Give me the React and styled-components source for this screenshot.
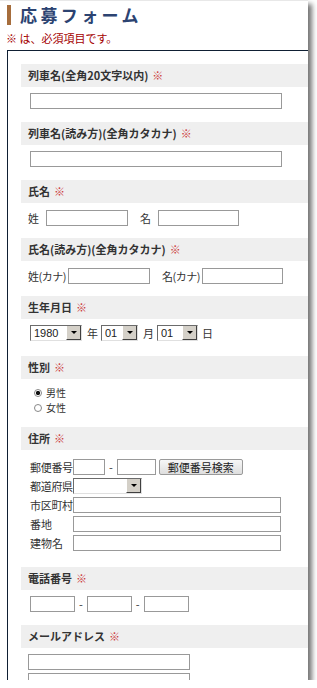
import React from 'react'
import styled, { createGlobalStyle } from 'styled-components'

const GlobalStyle = createGlobalStyle`
  body {
    margin: 0;
    background: #fff;
    font-family: "Noto Sans CJK JP", "Liberation Sans", sans-serif;
    color: #333;
  }
`;

const Page = styled.div`
  width: 308px;
  height: 680px;
  background: #fff;
  border-top: 1px solid #e8e8e8;
  box-sizing: border-box;
  box-shadow: 4px 4px 5px rgba(0, 0, 0, 0.55);
  overflow: hidden;
`;

const Title = styled.h1`
  margin: 4px 0 0 7px;
  height: 20px;
  border-left: 4px solid #a66d3c;
  padding-left: 9px;
  font-size: 17px;
  line-height: 20px;
  font-weight: bold;
  letter-spacing: 3.4px;
  color: #2c4371;
  font-family: "Noto Sans CJK JP", sans-serif;
`;

const Note = styled.p`
  margin: 6px 0 0 6px;
  font-size: 11px;
  line-height: 14px;
  color: #a40000;
`;

const FormBox = styled.div`
  margin: 5px 0 0 7px;
  border-top: 1px solid #0f1f33;
  border-left: 1px solid #0f1f33;
  padding: 13px 0 0 13px;
`;

const Section = styled.section``;

const Head = styled.div`
  height: 23px;
  line-height: 23px;
  background: #efefef;
  padding-left: 7px;
  font-size: 11px;
  font-weight: bold;
  color: #333;
`;

const Req = styled.span`
  color: #cc3a3a;
  font-weight: normal;
  margin-left: 4px;
`;

const Body = styled.div`
  display: flex;
  flex-direction: column;
  gap: ${p => p.$gap ?? 3}px;
  padding: ${p => p.$top ?? 6}px 0 ${p => p.$bottom ?? 13}px ${p => p.$left ?? 9}px;
  font-size: 11px;
`;

const Row = styled.div`
  display: flex;
  align-items: center;
  height: ${p => p.$h || 16}px;
`;

const TextInput = styled.input`
  box-sizing: border-box;
  width: ${p => p.$w}px;
  height: 16px;
  border: 1px solid #999;
  padding: 0 2px;
  margin: 0;
  font-size: 11px;
  background: #fff;
  flex-shrink: 0;
`;

const Label = styled.span`
  display: inline-block;
  flex-shrink: 0;
  width: ${p => (p.$w ? p.$w + 'px' : 'auto')};
  margin: 0 ${p => p.$mr || 0}px 0 ${p => p.$ml || 0}px;
  font-size: ${p => p.$fs || 11}px;
  line-height: 12px;
  color: #333;
  white-space: nowrap;
  letter-spacing: ${p => p.$ls || 0}px;
`;

const Dash = styled.span`
  margin: 0 4px;
  font-size: 11px;
  line-height: 12px;
`;

const SelectBox = styled.div`
  display: flex;
  flex-shrink: 0;
  box-sizing: border-box;
  width: ${p => p.$w}px;
  height: 16px;
  border-top: 1px solid #6b6b6b;
  border-left: 1px solid #6b6b6b;
  border-right: 1px solid #e0e0e0;
  border-bottom: 1px solid #e0e0e0;
  background: #fff;
`;

const Select = styled.select`
  appearance: none;
  flex: 1;
  min-width: 0;
  border: none;
  outline: none;
  background: transparent;
  padding: 0 3px;
  font-size: 11px;
  font-family: "Liberation Sans", sans-serif;
  color: #222;
`;

const DropButton = styled.span`
  width: 15px;
  background: #d4d0c8;
  border-left: 1px solid #fff;
  border-right: 1px solid #404040;
  border-bottom: 1px solid #404040;
  display: flex;
  align-items: center;
  justify-content: center;
  box-sizing: border-box;
  &::after {
    content: '';
    border-left: 3px solid transparent;
    border-right: 3px solid transparent;
    border-top: 3px solid #000;
  }
`;

const Button = styled.button`
  height: 16px;
  padding: 0 8px;
  margin-left: 3px;
  border: 1px solid #9a9a9a;
  border-radius: 2px;
  background: linear-gradient(#f7f7f7, #dedede);
  font-size: 11px;
  line-height: 14px;
  font-family: "Noto Sans CJK JP", sans-serif;
  color: #222;
`;

const Radio = styled.input`
  appearance: none;
  width: 8px;
  height: 8px;
  margin: 0 4px 0 0;
  border-radius: 50%;
  border: 1px solid #888;
  background: ${p => (p.checked ? 'radial-gradient(circle, #111 45%, #fff 55%)' : '#fff')};
`;

const DropDown = ({ w, value }) => (
  <SelectBox $w={w}>
    <Select defaultValue={value}>
      <option>{value}</option>
    </Select>
    <DropButton />
  </SelectBox>
);

const Field = ({ title, children }) => (
  <Section>
    <Head>
      {title}
      <Req>※</Req>
    </Head>
    {children}
  </Section>
);

const App = () => (
  <Page>
    <GlobalStyle />
    <Title>応募フォーム</Title>
    <Note>※ は、必須項目です。</Note>
    <FormBox>
      <Field title="列車名(全角20文字以内)">
        <Body>
          <Row><TextInput $w={252} /></Row>
        </Body>
      </Field>
      <Field title="列車名(読み方)(全角カタカナ)">
        <Body>
          <Row><TextInput $w={252} /></Row>
        </Body>
      </Field>
      <Field title="氏名">
        <Body $top={7} $bottom={12} $left={7}>
          <Row>
            <Label $mr={7}>姓</Label>
            <TextInput $w={82} />
            <Label $ml={12} $mr={7}>名</Label>
            <TextInput $w={81} />
          </Row>
        </Body>
      </Field>
      <Field title="氏名(読み方)(全角カタカナ)">
        <Body $top={7} $bottom={12} $left={7}>
          <Row>
            <Label $mr={2} $ls={-0.5}>姓(カナ)</Label>
            <TextInput $w={82} />
            <Label $ml={12} $mr={2} $ls={-0.5}>名(カナ)</Label>
            <TextInput $w={81} />
          </Row>
        </Body>
      </Field>
      <Field title="生年月日">
        <Body $top={6} $bottom={15} $left={9}>
          <Row>
            <DropDown w={52} value="1980" />
            <Label $ml={5} $mr={3}>年</Label>
            <DropDown w={37} value="01" />
            <Label $ml={5} $mr={3}>月</Label>
            <DropDown w={41} value="01" />
            <Label $ml={4}>日</Label>
          </Row>
        </Body>
      </Field>
      <Field title="性別">
        <Body $top={6} $bottom={12} $left={13} $gap={0}>
          <Row $h={15}>
            <Radio type="radio" name="sex" checked readOnly />
            <Label $fs={10}>男性</Label>
          </Row>
          <Row $h={15}>
            <Radio type="radio" name="sex" checked={false} readOnly />
            <Label $fs={10}>女性</Label>
          </Row>
        </Body>
      </Field>
      <Field title="住所">
        <Body $top={9} $bottom={16} $left={9}>
          <Row>
            <Label $w={43} $ls={-0.3}>郵便番号</Label>
            <TextInput $w={32} />
            <Dash>-</Dash>
            <TextInput $w={39} />
            <Button>郵便番号検索</Button>
          </Row>
          <Row>
            <Label $w={43} $ls={-0.3}>都道府県</Label>
            <DropDown w={69} value="" />
          </Row>
          <Row>
            <Label $w={43} $ls={-0.3}>市区町村</Label>
            <TextInput $w={208} />
          </Row>
          <Row>
            <Label $w={43}>番地</Label>
            <TextInput $w={208} />
          </Row>
          <Row>
            <Label $w={43}>建物名</Label>
            <TextInput $w={208} />
          </Row>
        </Body>
      </Field>
      <Field title="電話番号">
        <Body>
          <Row>
            <TextInput $w={45} />
            <Dash>-</Dash>
            <TextInput $w={45} />
            <Dash>-</Dash>
            <TextInput $w={45} />
          </Row>
        </Body>
      </Field>
      <Field title="メールアドレス">
        <Body $left={7}>
          <Row><TextInput $w={162} /></Row>
          <Row><TextInput $w={162} /></Row>
        </Body>
      </Field>
    </FormBox>
  </Page>
);

export default App
